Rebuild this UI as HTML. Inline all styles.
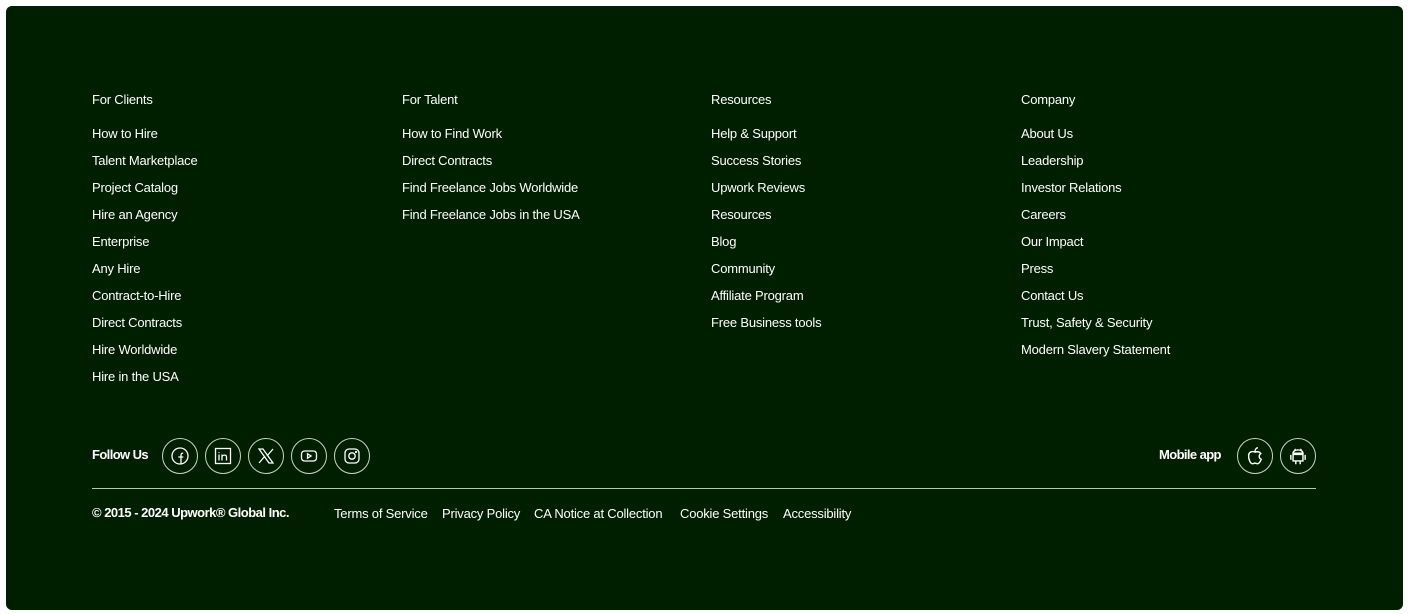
<!DOCTYPE html>
<html><head><style>
body{margin:0;background:#fff;font-family:"Liberation Sans",sans-serif;}
.box{position:absolute;left:6px;top:6px;width:1397px;height:604px;background:#001e00;border-radius:6px;}
.t{position:absolute;color:#fff;font-size:13px;line-height:16px;white-space:nowrap;letter-spacing:-0.2px}
.c{position:absolute;width:34px;height:34px;border:1px solid #c8d4c8;border-radius:50%;top:438px;display:flex;align-items:center;justify-content:center}
.c svg{width:20px;height:20px;fill:none;stroke:#fff;stroke-width:1.3}
.line{position:absolute;left:92px;top:488px;width:1224px;height:1px;background:#b5c4b5}
b{font-weight:bold;letter-spacing:-0.6px}
</style></head><body>
<div class="box"></div>
<div class="t" style="left:92px;top:92px">For Clients</div>
<div class="t" style="left:402px;top:92px">For Talent</div>
<div class="t" style="left:711px;top:92px">Resources</div>
<div class="t" style="left:1021px;top:92px">Company</div>

<div class="t" style="left:92px;top:120px;line-height:27px">How to Hire<br>Talent Marketplace<br>Project Catalog<br>Hire an Agency<br>Enterprise<br>Any Hire<br>Contract-to-Hire<br>Direct Contracts<br>Hire Worldwide<br>Hire in the USA</div>
<div class="t" style="left:402px;top:120px;line-height:27px">How to Find Work<br>Direct Contracts<br>Find Freelance Jobs Worldwide<br>Find Freelance Jobs in the USA</div>
<div class="t" style="left:711px;top:120px;line-height:27px">Help &amp; Support<br>Success Stories<br>Upwork Reviews<br>Resources<br>Blog<br>Community<br>Affiliate Program<br>Free Business tools</div>
<div class="t" style="left:1021px;top:120px;line-height:27px">About Us<br>Leadership<br>Investor Relations<br>Careers<br>Our Impact<br>Press<br>Contact Us<br>Trust, Safety &amp; Security<br>Modern Slavery Statement</div>

<div class="t" style="left:92px;top:447px"><b>Follow Us</b></div>
<div class="c" style="left:162px"><svg viewBox="0 0 20 20"><circle cx="10" cy="10" r="8"/><path d="M11 18V9.5c0-1.8.6-2.5 2.2-2.5M8.3 11h5"/></svg></div>
<div class="c" style="left:205px"><svg viewBox="0 0 20 20"><rect x="2.5" y="2.5" width="15" height="15"/><path d="M6 8.5v6M6 6v.8M9 14.5v-6M9 11c0-2 4.5-3 4.5 0v3.5"/></svg></div>
<div class="c" style="left:248px"><svg viewBox="0 0 20 20"><path d="M3 3h4l10 14h-4zM17 3l-6 7M3 17l6-7"/></svg></div>
<div class="c" style="left:291px"><svg viewBox="0 0 20 20"><rect x="2.5" y="5" width="15" height="10" rx="3"/><path d="M8.5 7.8v4.4l3.6-2.2z"/></svg></div>
<div class="c" style="left:334px"><svg viewBox="0 0 20 20"><rect x="3" y="3" width="14" height="14" rx="4"/><circle cx="10" cy="10" r="3.2"/><circle cx="14" cy="6" r=".5"/></svg></div>

<div class="t" style="left:1159px;top:447px"><b>Mobile app</b></div>
<div class="c" style="left:1237px"><svg viewBox="0 0 20 20" style="width:22px;height:22px"><path d="M10 6.5c-1.8-1-5.5-.8-5.8 3-.3 3.5 1.8 7.5 3.5 7.5 1 0 1.4-.5 2.3-.5s1.3.5 2.3.5c1.5 0 2.8-2.3 3.3-4-2.3-1-2.3-4.2-.3-5.2-1.4-2-3.8-1.8-5.3-1.3zM10 6c0-1.8 1-3.3 2.6-3.6"/></svg></div>
<div class="c" style="left:1280px"><svg viewBox="0 0 20 20" style="width:22px;height:22px"><path d="M5.5 8.5h9v6h-9zM5.5 7.5c0-4 9-4 9 0zM3.5 9v4.5M16.5 9v4.5M8 14.5v3M12 14.5v3M7 3.5l1.2 1.8M13 3.5l-1.2 1.8"/></svg></div>

<div class="line"></div>
<div class="t" style="left:92px;top:505px"><b style="letter-spacing:-0.5px">© 2015 - 2024 Upwork® Global Inc.</b></div>
<div class="t" style="left:334px;top:506px">Terms of Service</div>
<div class="t" style="left:442px;top:506px">Privacy Policy</div>
<div class="t" style="left:534px;top:506px">CA Notice at Collection</div>
<div class="t" style="left:680px;top:506px">Cookie Settings</div>
<div class="t" style="left:783px;top:506px">Accessibility</div>
</body></html>
